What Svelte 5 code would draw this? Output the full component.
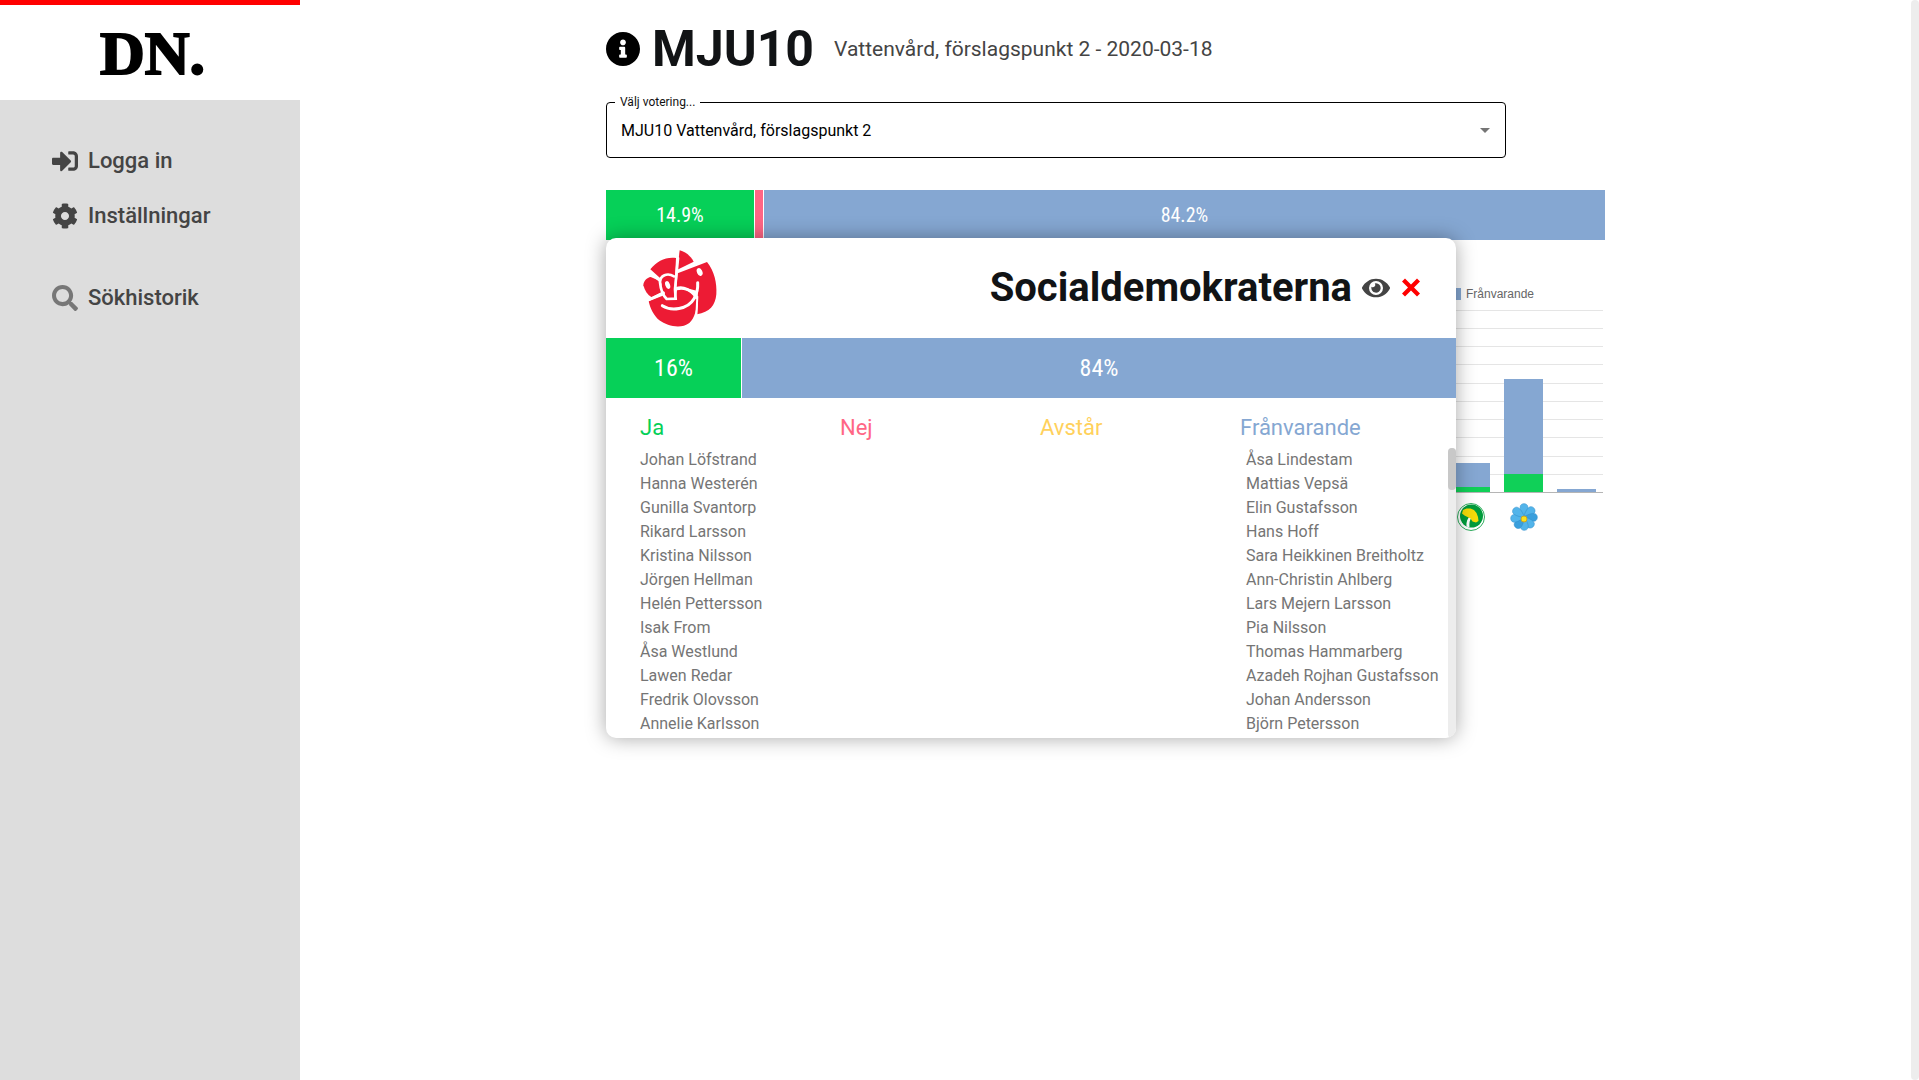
<script lang="ts">
  let open = $state(true);
  let vote = $state('MJU10 Vattenvård, förslagspunkt 2');

  const total = [
    { kind: 'yes', share: 14.9, label: '14.9%' },
    { kind: 'no', share: 0.9, label: '' },
    { kind: 'absent', share: 84.2, label: '84.2%' }
  ];
  const party = [
    { kind: 'yes', share: 16, label: '16%' },
    { kind: 'absent', share: 84, label: '84%' }
  ];
  const groups = [
    {
      kind: 'yes',
      title: 'Ja',
      names: ['Johan Löfstrand', 'Hanna Westerén', 'Gunilla Svantorp', 'Rikard Larsson', 'Kristina Nilsson', 'Jörgen Hellman', 'Helén Pettersson', 'Isak From', 'Åsa Westlund', 'Lawen Redar', 'Fredrik Olovsson', 'Annelie Karlsson']
    },
    { kind: 'no', title: 'Nej', names: [] },
    { kind: 'abstain', title: 'Avstår', names: [] },
    {
      kind: 'absent',
      title: 'Frånvarande',
      names: ['Åsa Lindestam', 'Mattias Vepsä', 'Elin Gustafsson', 'Hans Hoff', 'Sara Heikkinen Breitholtz', 'Ann-Christin Ahlberg', 'Lars Mejern Larsson', 'Pia Nilsson', 'Thomas Hammarberg', 'Azadeh Rojhan Gustafsson', 'Johan Andersson', 'Björn Petersson']
    }
  ];
  const gridLines = [30, 48, 66, 84, 103, 121, 139, 157, 176, 194];
  const bars = [
    { x: 845, top: 183, yes: 207 },
    { x: 898, top: 99, yes: 194 },
    { x: 951, top: 209, yes: 212 }
  ];
  const petals = [0, 48, 92, 138, 178, 218, 262, 308];
</script>

{#snippet bar(parts)}
  {#each parts as part}
    <div class="part bg-{part.kind}" style="width: {part.share}%">{part.label}</div>
  {/each}
{/snippet}

<div class="page">
  <aside>
    <a class="brand" href="#start" aria-label="DN.">
      <svg width="116" height="80" viewBox="0 0 116 80" aria-hidden="true">
        <text x="8" y="61" class="brand-text">DN.</text>
      </svg>
    </a>
    <nav>
      <a href="#login">
        <svg viewBox="0 0 512 512"><path d="M416 448h-84c-6.600 0-12-5.400-12-12v-40c0-6.600 5.400-12 12-12h84c17.700 0 32-14.300 32-32V160c0-17.700-14.300-32-32-32h-84c-6.600 0-12-5.400-12-12V76c0-6.600 5.400-12 12-12h84c53 0 96 43 96 96v192c0 53-43 96-96 96zm-47-201L201 79c-15-15-41-4.500-41 17v96H24c-13.300 0-24 10.700-24 24v96c0 13.300 10.700 24 24 24h136v96c0 21.500 26 32 41 17l168-168c9.300-9.400 9.300-24.600 0-34z" /></svg>
        Logga in
      </a>
      <a href="#settings">
        <svg viewBox="0 0 512 512"><path d="M487.400 315.700l-42.600-24.600c4.300-23.200 4.300-47 0-70.200l42.600-24.600c4.900-2.800 7.100-8.600 5.500-14-11.100-35.600-30-67.800-54.700-94.600-3.800-4.100-10-5.100-14.800-2.300L380.800 110c-17.900-15.400-38.500-27.300-60.800-35.100V25.800c0-5.600-3.900-10.500-9.400-11.700-36.700-8.200-74.300-7.800-109.200 0-5.500 1.200-9.400 6.100-9.400 11.700V75c-22.200 7.900-42.800 19.800-60.800 35.100L88.700 85.500c-4.900-2.800-11-1.900-14.800 2.300-24.700 26.700-43.600 58.900-54.700 94.600-1.700 5.400.6 11.200 5.500 14L67.300 221c-4.300 23.200-4.300 47 0 70.200l-42.600 24.600c-4.900 2.800-7.100 8.600-5.500 14 11.100 35.600 30 67.800 54.700 94.600 3.800 4.100 10 5.100 14.800 2.300l42.600-24.600c17.900 15.400 38.500 27.300 60.800 35.100v49.200c0 5.600 3.900 10.500 9.400 11.700 36.700 8.200 74.300 7.800 109.200 0 5.500-1.200 9.400-6.100 9.400-11.700v-49.200c22.200-7.900 42.800-19.800 60.800-35.100l42.600 24.600c4.900 2.800 11 1.900 14.800-2.300 24.700-26.700 43.600-58.900 54.700-94.600 1.500-5.500-.7-11.300-5.600-14.100zM256 336c-44.100 0-80-35.900-80-80s35.900-80 80-80 80 35.900 80 80-35.900 80-80 80z" /></svg>
        Inställningar
      </a>
      <a class="history" href="#history">
        <svg viewBox="0 0 512 512"><path d="M505 442.700L405.300 343c-4.500-4.500-10.600-7-17-7H372c27.600-35.300 44-79.700 44-128C416 93.100 322.900 0 208 0S0 93.100 0 208s93.100 208 208 208c48.300 0 92.700-16.400 128-44v16.300c0 6.400 2.500 12.500 7 17l99.700 99.700c9.400 9.400 24.600 9.400 33.900 0l28.300-28.300c9.400-9.400 9.400-24.600.1-34zM208 336c-70.700 0-128-57.200-128-128 0-70.700 57.200-128 128-128 70.700 0 128 57.200 128 128 0 70.700-57.200 128-128 128z" /></svg>
        Sökhistorik
      </a>
    </nav>
  </aside>

  <main>
    <div class="content">
      <header>
        <svg class="info" viewBox="8 8 496 496"><path d="M256 8C119.043 8 8 119.083 8 256c0 136.997 111.043 248 248 248s248-111.003 248-248C504 119.083 392.957 8 256 8zm0 110c23.196 0 42 18.804 42 42s-18.804 42-42 42-42-18.804-42-42 18.804-42 42-42zm56 254c0 6.627-5.373 12-12 12h-88c-6.627 0-12-5.373-12-12v-24c0-6.627 5.373-12 12-12h12v-64h-12c-6.627 0-12-5.373-12-12v-24c0-6.627 5.373-12 12-12h64c6.627 0 12 5.373 12 12v100h12c6.627 0 12 5.373 12 12v24z" /></svg>
        <h1>MJU10</h1>
        <p>Vattenvård, förslagspunkt 2 - 2020-03-18</p>
      </header>

      <fieldset>
        <legend><label for="vote">Välj votering...</label></legend>
        <div class="field">
          <select id="vote" bind:value={vote}>
            <option>MJU10 Vattenvård, förslagspunkt 2</option>
          </select>
          <svg width="10" height="5" viewBox="0 0 10 5"><path d="M0 0h10L5 5z" /></svg>
        </div>
      </fieldset>

      <section class="result">
        <div class="bar">{@render bar(total)}</div>

        <svg class="chart" viewBox="0 0 999 260">
          <rect class="fill-absent" x="815" y="8" width="40" height="12" />
          <text x="860" y="18">Frånvarande</text>
          {#each gridLines as y}
            <rect class="grid-line" x="0" {y} width="997" height="1" />
          {/each}
          <rect class="base-line" x="0" y="212" width="997" height="1" />
          {#each bars as b}
            <rect class="fill-absent" x={b.x} y={b.top} width="39" height={b.yes - b.top} />
            <rect class="fill-yes" x={b.x} y={b.yes} width="39" height={212 - b.yes} />
          {/each}
          <g transform="translate(865 237)">
            <circle r="13.500" fill="#fff" stroke="#2fae5e" stroke-width="1" />
            <circle cx="0.500" cy="-1" r="11.500" fill="#009c3b" />
            <path d="M-4.500 9.500C-5 5-3.500 1-0.500-1.500L1 0C-1.500 3-2 6-1.500 10.500z" fill="#fff" />
            <path d="M-9-3.500l1-3.500 3.500-1.500 4 0 3.500 1.500 2.500 3 1.500 4 .5 4-2.500 1.500-3.500-1-2-3-3-1.500-3-1.500z" fill="#f6dc0a" />
          </g>
          <g transform="translate(918 237)">
            {#each petals as angle, i}
              <path class="petal" class:deep={i % 3 === 2} d="M0 1C-2-3-5-8-3.500-11.500C-2-14 2-14 3.500-11.500C5-8 2-3 0 1z" transform="rotate({angle})" />
            {/each}
            <circle cx="0" cy="2" r="3" fill="#f9e21b" stroke="#c9a524" stroke-width="1" />
          </g>
        </svg>

        {#if open}
          <article>
            <div class="head">
              <svg class="rose" width="90" height="85" viewBox="0 0 270 255">
                <g fill="#ed1b34">
                  <path d="M46 70C66 45 92 32 123 36L117 158L94 158L82 128L76 97z" />
                  <path d="M134 13C154 18 168 32 176 47L127 71z" />
                  <path d="M128 82L216 48C238 76 246 110 244 145C241 178 224 199 186 205L189 175L188 135L150 125L124 126z" />
                  <path d="M47 93C36 94 25 106 25 118C29 134 38 147 50 154L87 134L73 104z" />
                  <path d="M41 166L91 146L122 158L126 133C150 126 170 139 186 157C186 190 179 218 163 231C138 250 98 241 73 223C56 209 46 188 41 166z" />
                </g>
                <g fill="none" stroke="#fff" stroke-width="8" stroke-linecap="round">
                  <path d="M43 77L75 104" />
                  <path d="M129 36L120 130L122 158L95 159C85 149 77 131 75 109C75 88 97 79 117 91" />
                  <path d="M38 163L86 141" />
                  <path d="M124 127C146 120 169 132 184 155" />
                  <path d="M188 110C189 125 185 145 177 158C158 191 108 196 82 179" stroke-width="9" />
                  <path d="M187 152L184 209" stroke-width="6" />
                </g>
                <ellipse cx="98" cy="117" rx="7" ry="12" fill="#fff" transform="rotate(-20 98 117)" />
                <ellipse cx="194" cy="78" rx="8" ry="12" fill="#fff" transform="rotate(-25 194 78)" />
              </svg>
              <h2>Socialdemokraterna</h2>
              <button class="eye" aria-label="Visa parti">
                <svg width="28" height="20" viewBox="0 62 576 388"><path d="M572.520 241.400C518.290 135.590 410.930 64 288 64S57.680 135.640 3.480 241.410a32.350 32.350 0 0 0 0 29.190C57.710 376.410 165.070 448 288 448s230.320-71.640 284.520-177.410a32.350 32.350 0 0 0 0-29.190zM288 400a144 144 0 1 1 144-144 143.930 143.930 0 0 1-144 144zm0-240a95.310 95.310 0 0 0-25.310 3.790 47.850 47.850 0 0 1-66.900 66.900A95.780 95.780 0 1 0 288 160z" /></svg>
              </button>
              <button class="close" aria-label="Stäng" onclick={() => (open = false)}>
                <svg width="20" height="20" viewBox="0 0 20 20"><path d="M4 0.500L10 6.500L16 0.500L19 3.500L13 9.500L19 15.500L16 18.500L10 12.500L4 18.500L1 15.500L7 9.500L1 3.500z" /></svg>
              </button>
            </div>
            <div class="bar party">{@render bar(party)}</div>
            <div class="titles">
              {#each groups as g}
                <h3 class="text-{g.kind}">{g.title}</h3>
              {/each}
            </div>
            <div class="scroll">
              <div class="lists">
                {#each groups as g}
                  <ul>
                    {#each g.names as name}
                      <li>{name}</li>
                    {/each}
                  </ul>
                {/each}
              </div>
              <div class="track"><div class="thumb"></div></div>
            </div>
          </article>
        {/if}
      </section>
    </div>
  </main>
  <div class="track"></div>
</div>

<style>
  :global(body) {
    background: #fff;
    font-family: Roboto, 'Liberation Sans', sans-serif;
    color: #111315;
  }
  h1, h2, h3, p, ul { margin: 0; padding: 0; }
  .page { display: flex; min-height: 100vh; }
  aside { width: 300px; flex: none; background: #ddd; }
  .brand {
    display: flex;
    align-items: center;
    justify-content: center;
    box-sizing: border-box;
    height: 100px;
    border-top: 5px solid #f00;
    background: #fff;
  }
  .brand-text { font: bold 62px 'Liberation Serif', serif; fill: #000; stroke: #000; stroke-width: 2px; }
  nav { display: flex; flex-direction: column; gap: 25px; padding: 46px 52px; }
  nav a {
    display: flex;
    align-items: center;
    gap: 10px;
    font-size: 22px;
    line-height: 30px;
    font-weight: 500;
    color: #444;
    text-decoration: none;
  }
  nav svg { width: 26px; height: 26px; fill: #444; }
  nav .history { margin-top: 27px; }
  nav .history svg { fill: #777; }
  main { flex: 1; min-width: 0; }
  .content { max-width: 999px; margin: 0 auto; }
  header { display: flex; align-items: center; box-sizing: border-box; height: 96px; padding-top: 2px; }
  .info { width: 34px; height: 34px; margin-right: 12px; }
  h1 { font-size: 50px; line-height: 60px; }
  header p { margin-left: 20px; font-size: 21px; line-height: 30px; color: #444; }
  fieldset {
    box-sizing: border-box;
    max-width: 900px;
    height: 62px;
    margin: 0 0 32px;
    padding: 0;
    border: 1px solid #000;
    border-radius: 4px;
  }
  legend { margin-left: 8px; padding: 0 5px; font-size: 12px; line-height: 12px; color: #111; }
  .field { display: flex; align-items: center; height: 44px; padding-right: 15px; }
  select {
    flex: 1;
    height: 40px;
    padding: 0 14px;
    border: 0;
    appearance: none;
    background: none;
    font: 16px Roboto, sans-serif;
    color: #000;
  }
  .field svg { fill: #757575; }
  .result { position: relative; }
  .bar { display: flex; height: 50px; font-size: 20px; }
  .bar.party { height: 60px; font-size: 24px; }
  .part {
    display: flex;
    align-items: center;
    justify-content: center;
    box-sizing: border-box;
    border-right: 1px solid #fff;
    color: #fff;
    font-family: 'Roboto Condensed', Roboto, sans-serif;
  }
  .part:last-child { border-right: 0; }
  .bg-yes { background: #06d058; }
  .bg-no { background: #ff6685; }
  .bg-absent { background: #85a7d2; }
  .text-yes { color: #06d058; }
  .text-no { color: #ff6685; }
  .text-abstain { color: #ffd15c; }
  .text-absent { color: #85a7d2; }
  .chart { display: block; width: 100%; margin-top: 40px; }
  .chart text { font: 12px 'Liberation Sans', sans-serif; fill: #666; }
  .fill-absent { fill: #85a7d2; }
  .fill-yes { fill: #10d058; }
  .grid-line { fill: #e5e5e5; }
  .base-line { fill: #b5b5b5; }
  .petal { fill: #52b4ea; stroke: #318fcb; stroke-width: 0.500; }
  .petal.deep { fill: #3a9fdc; }
  article {
    position: absolute;
    top: 48px;
    left: 0;
    width: 850px;
    max-width: 100%;
    background: #fff;
    border-radius: 10px;
    overflow: hidden;
    box-shadow: 0 0 20px rgba(0, 0, 0, 0.35);
  }
  .head { display: flex; align-items: center; height: 100px; padding: 0 35px 0 29px; }
  .rose { margin-right: auto; }
  h2 { font-size: 40px; line-height: 48px; }
  button { display: flex; padding: 0; border: 0; background: none; cursor: pointer; }
  .eye { margin-left: 10px; fill: #444; }
  .close { margin-left: 11px; fill: #f00; }
  .titles { display: grid; grid-template-columns: repeat(4, 1fr); padding: 14px 16px 4px 34px; }
  h3 { font-size: 22px; line-height: 32px; font-weight: 400; }
  .scroll { display: flex; height: 290px; overflow: hidden; }
  .lists { flex: 1; display: grid; grid-template-columns: repeat(4, 1fr); padding-left: 34px; }
  ul { list-style: none; }
  li { font-size: 16px; line-height: 24px; color: #757575; white-space: nowrap; }
  .track { width: 8px; flex: none; border-radius: 4px; background: #ededed; }
  .thumb { height: 42px; border-radius: 4px; background: #c8c8c8; }
</style>
